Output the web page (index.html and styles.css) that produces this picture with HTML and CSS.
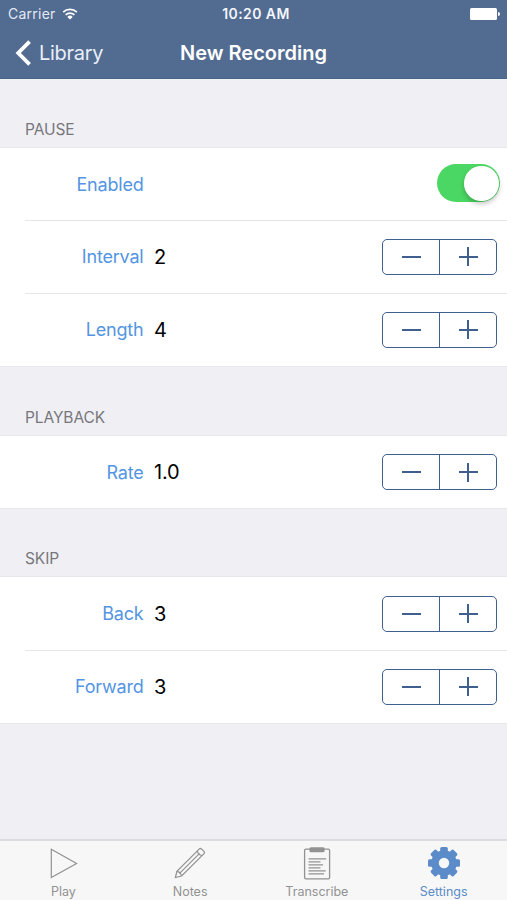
FILE: index.html
```
<!DOCTYPE html>
<html lang="en">
<head>
    <meta charset="UTF-8">
    <meta name="viewport" content="width=device-width, initial-scale=1.0">
    <title>New Recording</title>
    <link rel="stylesheet" href="styles.css">
</head>
<body>
    <header class="header">
        <div class="status-bar">
            <div class="carrier">
                <span>Carrier</span>
                <svg class="wifi" width="16" height="12" viewBox="0 0 16 12">
                    <path d="M1.2 4.2a9.8 9.8 0 0 1 13.6 0" fill="none" stroke="#fff" stroke-width="1.8"/>
                    <path d="M3.6 6.9a6.3 6.3 0 0 1 8.8 0" fill="none" stroke="#fff" stroke-width="1.7"/>
                    <path d="M5.3 8.9a3.9 3.9 0 0 1 5.4 0L8 11.6z" fill="#fff"/>
                </svg>
            </div>
            <span class="time">10:20 AM</span>
            <svg class="battery" width="30" height="12" viewBox="0 0 30 12">
                <rect x="0" y="0" width="27" height="12" rx="1.5" fill="#fff"/>
                <path d="M28 4a2 2 0 0 1 0 4z" fill="#fff"/>
            </svg>
        </div>
        <nav class="nav-bar">
            <a class="back" href="#">
                <svg width="17" height="26" viewBox="0 0 17 26">
                    <path d="M14.6 1.6L3.2 13l11.4 11.4" fill="none" stroke="#fff" stroke-width="3.8"/>
                </svg>
                <span>Library</span>
            </a>
            <h1>New Recording</h1>
        </nav>
    </header>

    <main class="settings">
        <h2>PAUSE</h2>
        <div class="group pause">
            <div class="row">
                <span class="label">Enabled</span>
                <span class="value"></span>
                <span class="switch"><span class="knob"></span></span>
            </div>
            <div class="row">
                <span class="label">Interval</span>
                <span class="value">2</span>
                <div class="stepper"><button class="minus"></button><button class="plus"></button></div>
            </div>
            <div class="row">
                <span class="label">Length</span>
                <span class="value">4</span>
                <div class="stepper"><button class="minus"></button><button class="plus"></button></div>
            </div>
        </div>

        <h2>PLAYBACK</h2>
        <div class="group playback">
            <div class="row">
                <span class="label">Rate</span>
                <span class="value">1.0</span>
                <div class="stepper"><button class="minus"></button><button class="plus"></button></div>
            </div>
        </div>

        <h2>SKIP</h2>
        <div class="group skip">
            <div class="row">
                <span class="label">Back</span>
                <span class="value">3</span>
                <div class="stepper"><button class="minus"></button><button class="plus"></button></div>
            </div>
            <div class="row">
                <span class="label">Forward</span>
                <span class="value">3</span>
                <div class="stepper"><button class="minus"></button><button class="plus"></button></div>
            </div>
        </div>
    </main>

    <footer class="tab-bar">
        <a class="tab" href="#">
            <svg width="34" height="34" viewBox="0 0 34 34" fill="none" stroke="#929292" stroke-width="1.2">
                <path d="M5.3 3.2v28.4L30.6 17.4z"/>
            </svg>
            <span>Play</span>
        </a>
        <a class="tab" href="#">
            <svg width="34" height="34" viewBox="0 0 34 34" fill="none" stroke="#929292" stroke-width="1.2">
                <path d="M2.4 31.5l1.5-6.2L26.1 3.1q1.2-1.2 2.6 0l2.1 2.1q1.3 1.3 0 2.6L8.6 30z"/>
                <path d="M3.9 25.3q3.7.6 4.7 4.7M6.3 27.6L26.6 7.3M24.4 4.8q.2 4 4.7 4.7"/>
            </svg>
            <span>Notes</span>
        </a>
        <a class="tab" href="#">
            <svg width="34" height="34" viewBox="0 0 34 34" fill="none" stroke="#929292" stroke-width="1.3">
                <rect x="4.6" y="3.2" width="25" height="29.6" rx="1.2"/>
                <rect x="9.4" y="1.2" width="15.2" height="5" rx="1.5" fill="#929292" stroke="none"/>
                <path d="M8.5 12.8h17.7M8.5 15.8h12M8.5 18.8h14.5M8.5 21.8h12M8.5 24.8h17.2M8.5 27.8h15.5"/>
            </svg>
            <span>Transcribe</span>
        </a>
        <a class="tab active" href="#">
            <svg width="34" height="34" viewBox="0 0 34 34" fill="#5b8bc9">
                <circle cx="17" cy="17" r="9" fill="none" stroke="#5b8bc9" stroke-width="7.6"/>
                <g id="teeth">
                    <rect x="13.2" y="1" width="7.6" height="5.5" rx="1.5"/>
                    <rect x="13.2" y="27.5" width="7.6" height="5.5" rx="1.5"/>
                    <rect x="1" y="13.2" width="5.5" height="7.6" rx="1.5"/>
                    <rect x="27.5" y="13.2" width="5.5" height="7.6" rx="1.5"/>
                </g>
                <use href="#teeth" transform="rotate(45 17 17)"/>
            </svg>
            <span>Settings</span>
        </a>
    </footer>
</body>
</html>
```
FILE: styles.css
```
:root {
    --bar: #526b91;
    --tint: #3f5f8e;
    --blue: #5395e2;
}

* {
    box-sizing: border-box;
}

body {
    display: flex;
    flex-direction: column;
    height: 100vh;
    margin: 0;
    overflow: hidden;
    background: #efeff4;
    color: #000;
    font-family: Inter, "Liberation Sans", sans-serif;
}

a {
    color: inherit;
    text-decoration: none;
}

.header {
    flex: none;
    height: 79px;
    background: var(--bar);
    border-bottom: 1px solid #48648b;
    color: #fff;
}

.status-bar {
    display: grid;
    grid-template-columns: 1fr auto 1fr;
    align-items: center;
    height: 27px;
    padding: 0 7px 0 8px;
    font-size: 14px;
}

.carrier {
    display: flex;
    align-items: center;
    gap: 6px;
    color: #e3e9f2;
    letter-spacing: 0.25px;
}

.time {
    padding-left: 4px;
    font-weight: 600;
    font-size: 14px;
    letter-spacing: 0.4px;
    color: #f3f6fa;
}

.battery {
    justify-self: end;
}

.nav-bar {
    display: grid;
    grid-template-columns: 1fr auto 1fr;
    align-items: center;
    height: 51px;
    padding: 0 15px;
}

.back {
    display: flex;
    align-items: center;
    gap: 7px;
    font-size: 20px;
    letter-spacing: -0.3px;
    color: #e9eff8;
}

h1 {
    margin: 0;
    font-size: 20px;
    font-weight: 600;
    letter-spacing: 0;
}

.settings {
    flex: 1;
}

h2 {
    display: flex;
    align-items: flex-end;
    height: 69px;
    margin: 0;
    padding: 0 25px 8px;
    font-size: 15.5px;
    font-weight: 400;
    line-height: 20px;
    letter-spacing: -0.1px;
    color: #77777c;
}

.pause + h2 {
    height: 70px;
}

.group {
    background: #fff;
    box-shadow: 0 0 0 1px #e8e8ec;
}

.row {
    display: flex;
    align-items: center;
    position: relative;
    height: 73px;
    padding-right: 10px;
}

.pause .row:first-child,
.playback .row {
    height: 72px;
}

.row + .row::before {
    content: '';
    position: absolute;
    top: 0;
    left: 25px;
    right: 0;
    height: 1px;
    background: #e6e6e9;
}

.label {
    width: 143.5px;
    font-size: 18px;
    letter-spacing: -0.2px;
    text-align: right;
    color: var(--blue);
}

.value {
    flex: 1;
    padding-left: 10.5px;
    font-size: 20px;
    letter-spacing: -0.2px;
}

.switch {
    display: flex;
    justify-content: flex-end;
    width: 63px;
    height: 38px;
    margin: 0 -3px 2px 0;
    padding: 2px 1.5px;
    border-radius: 19px;
    background: #4bd763;
}

.knob {
    width: 34.5px;
    height: 34.5px;
    border-radius: 50%;
    background: #fff;
    box-shadow: 0 3px 5px rgba(0, 0, 0, 0.22);
}

.stepper {
    display: flex;
    width: 115px;
    height: 36px;
    border: 1.5px solid var(--tint);
    border-radius: 5px;
}

.stepper button {
    flex: 1;
    padding: 0;
    border: 0;
    background: linear-gradient(var(--tint), var(--tint)) center / 19px 2px no-repeat;
}

.stepper .plus {
    border-left: 1px solid var(--tint);
    background:
        linear-gradient(var(--tint), var(--tint)) center / 19px 2px no-repeat,
        linear-gradient(var(--tint), var(--tint)) center / 2px 19px no-repeat;
}

.tab-bar {
    display: grid;
    grid-template-columns: repeat(4, 1fr);
    flex: none;
    height: 61px;
    border-top: 2px solid #dcdce1;
    background: #f7f7f8;
}

.tab {
    display: flex;
    flex-direction: column;
    align-items: center;
    padding-top: 5px;
    font-size: 12.5px;
    line-height: 16px;
    color: #929292;
}

.tab span {
    margin-top: 4px;
}

.tab.active {
    color: #5b8bc9;
}
```
